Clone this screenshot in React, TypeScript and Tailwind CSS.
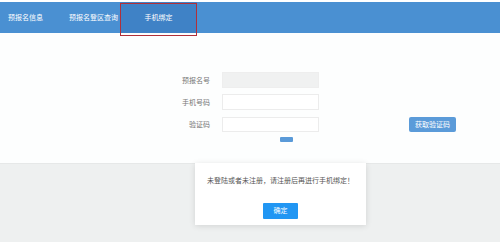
const fontStack = { fontFamily: '"Noto Sans CJK SC", "Noto Sans", sans-serif' };

const tabs = [
  { label: "预报名信息", cls: "w-[62px] pl-[8px]" },
  { label: "预报名登区查询", cls: "w-[58px] pl-[7px]" },
];

export default function App() {
  return (
    <div
      className="relative flex h-[242px] w-[500px] flex-col overflow-hidden bg-[#eef0f0]"
      style={fontStack}
    >
      {/* top nav */}
      <div className="h-[2px] bg-white" />
      <div className="flex h-[31px] items-center bg-[#4a90d2] text-[7px] text-white">
        {tabs.map((t) => (
          <div key={t.label} className={`flex h-full items-center ${t.cls}`}>
            {t.label}
          </div>
        ))}
        <div className="ml-[0px] flex h-full w-[77px] items-center justify-center bg-[#3f82c6]">
          手机绑定
        </div>
      </div>

      {/* form panel */}
      <div className="flex h-[130px] flex-col bg-[#fdfefe] pt-[39px] text-[7px] text-[#777]">
        <div className="flex items-center">
          <div className="w-[210px] text-right">预报名号</div>
          <div className="ml-[12px] h-[16px] w-[97px] border border-[#eeeeee] bg-[#f0f1f1]" />
        </div>
        <div className="mt-[6px] flex items-center">
          <div className="w-[210px] text-right">手机号码</div>
          <div className="ml-[12px] h-[16px] w-[97px] border border-[#ececec] bg-white" />
        </div>
        <div className="mt-[7px] flex items-center">
          <div className="w-[210px] text-right">验证码</div>
          <div className="ml-[12px] h-[15px] w-[97px] border border-[#ececec] bg-white" />
          <button className="ml-[90px] flex h-[15px] w-[47px] items-center justify-center rounded-[2px] bg-[#5b9bd9] text-[7px] text-white">
            获取验证码
          </button>
        </div>
        <div className="ml-[280px] mt-[5px] h-[5px] w-[13px] rounded-[1px] bg-[#5a9ad8]" />
      </div>
      <div className="h-px bg-[#e6e8e8]" />

      {/* annotation outline around active tab */}
      <div className="absolute left-[120px] top-[3px] h-[33px] w-[77px] border-[1.5px] border-[#b0303a]" />

      {/* alert dialog */}
      <div className="absolute left-[195px] top-[163px] flex h-[62px] w-[171px] flex-col items-center bg-white shadow-[0_1px_6px_rgba(0,0,0,0.12)]">
        <div className="mt-[12px] text-[7px] text-[#555]">未登陆或者未注册，请注册后再进行手机绑定！</div>
        <button className="mt-[17px] flex h-[16px] w-[35px] items-center justify-center rounded-[1px] bg-[#2196f3] text-[7px] text-white">
          确定
        </button>
      </div>
    </div>
  );
}
